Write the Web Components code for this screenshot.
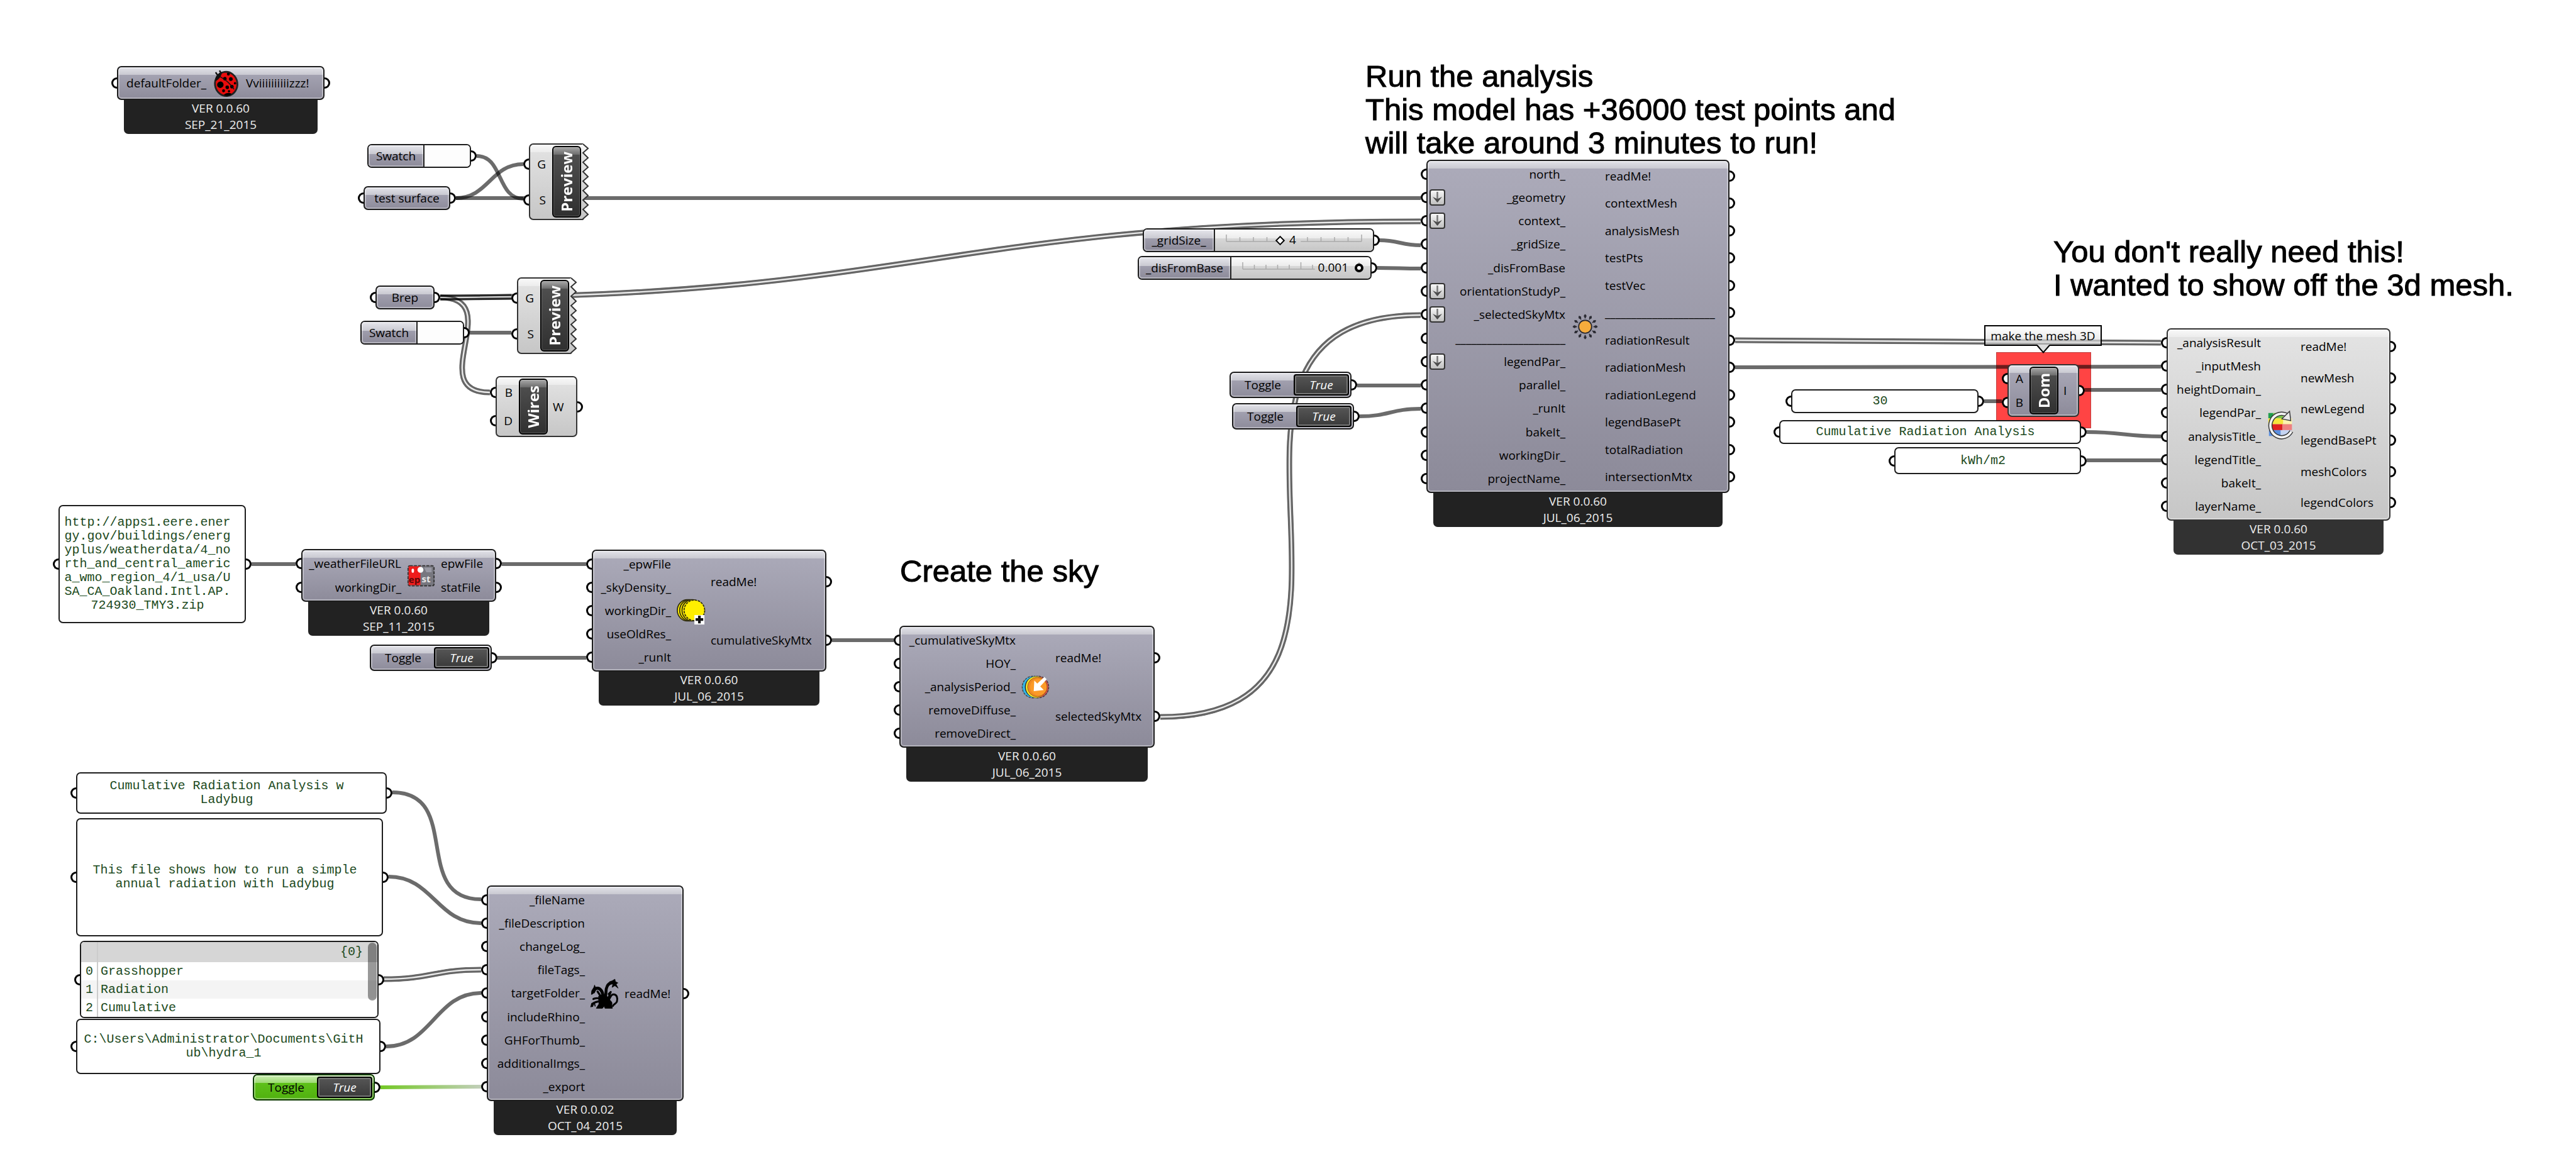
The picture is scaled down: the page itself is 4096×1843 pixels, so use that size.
<!DOCTYPE html>
<html lang="en">
<head>
<meta charset="utf-8">
<title>Cumulative Radiation Analysis</title>
<style>
  html, body { margin: 0; background: #fff; }
  body { font: 19px/26px "Open Sans", "Noto Sans", sans-serif; color: #000; }
</style>
</head>
<body>
<gh-canvas>
  <gh-group style="left:3174px;top:560px;width:151px;height:121px"></gh-group>

  <gh-wire from="758,248" to="832,316"></gh-wire>
  <gh-wire from="725,315" to="832,261"></gh-wire>
  <gh-wire from="725,315" to="2259,315"></gh-wire>
  <gh-wire list from="700,473" to="813,472"></gh-wire>
  <gh-wire list from="700,473" to="2259,352"></gh-wire>
  <gh-wire list from="700,473" to="779,624"></gh-wire>
  <gh-wire from="747,529" to="813,529"></gh-wire>
  <gh-wire from="2193,382" to="2259,390"></gh-wire>
  <gh-wire from="2190,426" to="2259,427"></gh-wire>
  <gh-wire from="2158,613" to="2259,613"></gh-wire>
  <gh-wire from="2162,662" to="2259,650"></gh-wire>
  <gh-wire list from="1845,1140" to="2259,501"></gh-wire>
  <gh-wire list from="2759,541" to="3436,545"></gh-wire>
  <gh-wire from="2759,584" to="3436,583"></gh-wire>
  <gh-wire from="3155,638" to="3183,638"></gh-wire>
  <gh-wire from="3315,620" to="3436,620"></gh-wire>
  <gh-wire from="3318,687" to="3436,694"></gh-wire>
  <gh-wire from="3318,732" to="3436,732"></gh-wire>
  <gh-wire from="400,897" to="470,897"></gh-wire>
  <gh-wire from="798,897" to="932,897"></gh-wire>
  <gh-wire from="791,1046" to="932,1046"></gh-wire>
  <gh-wire from="1323,1018" to="1421,1018"></gh-wire>
  <gh-wire from="624,1260" to="765,1430"></gh-wire>
  <gh-wire from="618,1394" to="765,1468"></gh-wire>
  <gh-wire list from="610,1557" to="765,1542"></gh-wire>
  <gh-wire from="614,1664" to="765,1579"></gh-wire>
  <gh-wire selected from="605,1729" to="765,1728"></gh-wire>

  <gh-component style="left:186px;top:105px;width:330px;--h:54px;--in:142px" version="VER 0.0.60" date="SEP_21_2015">
    <gh-port slot="in">defaultFolder_</gh-port>
    <gh-icon slot="icon" name="ladybug"></gh-icon>
    <gh-port slot="out" side="out">Vviiiiiiiiiizzz!</gh-port>
  </gh-component>

  <gh-swatch style="left:584px;top:229px" label="Swatch"></gh-swatch>
  <gh-param style="left:578px;top:296px;width:138px">test surface</gh-param>
  <gh-badge-component torn style="left:841px;top:228px;width:86px;--h:122px;--in:27px" label="Preview">
    <gh-port slot="in">G</gh-port>
    <gh-port slot="in">S</gh-port>
  </gh-badge-component>

  <gh-param style="left:597px;top:454px;width:94px">Brep</gh-param>
  <gh-swatch style="left:573px;top:510px" label="Swatch"></gh-swatch>
  <gh-badge-component torn style="left:822px;top:441px;width:86px;--h:122px;--in:27px" label="Preview">
    <gh-port slot="in">G</gh-port>
    <gh-port slot="in">S</gh-port>
  </gh-badge-component>
  <gh-badge-component style="left:788px;top:598px;width:130px;--h:97px;--in:27px" label="Wires">
    <gh-port slot="in">B</gh-port>
    <gh-port slot="in">D</gh-port>
    <gh-port slot="out" side="out">W</gh-port>
  </gh-badge-component>

  <gh-note style="left:2171px;top:95px">Run the analysis<br>This model has +36000 test points and<br>will take around 3 minutes to run!</gh-note>
  <gh-note style="left:3265px;top:374px">You don't really need this!<br>I wanted to show off the 3d mesh.</gh-note>
  <gh-note style="left:1431px;top:882px">Create the sky</gh-note>

  <gh-slider style="left:1817px;top:363px;width:368px;--label:113px;--pad:11px" label="_gridSize_" min="0" max="10" value="4" text="4" shape="diamond"></gh-slider>
  <gh-slider style="left:1809px;top:407px;width:372px;--label:147px;--pad:11px" label="_disFromBase" min="0" max="0.001" value="0.001" text="0.001" shape="ring"></gh-slider>

  <gh-component style="left:2268px;top:254px;width:482px;--h:530px;--in:221px" version="VER 0.0.60" date="JUL_06_2015">
    <gh-port slot="in">north_</gh-port>
    <gh-port slot="in" flatten>_geometry</gh-port>
    <gh-port slot="in" flatten>context_</gh-port>
    <gh-port slot="in">_gridSize_</gh-port>
    <gh-port slot="in">_disFromBase</gh-port>
    <gh-port slot="in" flatten>orientationStudyP_</gh-port>
    <gh-port slot="in" flatten>_selectedSkyMtx</gh-port>
    <gh-port slot="in">_____________________</gh-port>
    <gh-port slot="in" flatten>legendPar_</gh-port>
    <gh-port slot="in">parallel_</gh-port>
    <gh-port slot="in">_runIt</gh-port>
    <gh-port slot="in">bakeIt_</gh-port>
    <gh-port slot="in">workingDir_</gh-port>
    <gh-port slot="in">projectName_</gh-port>
    <gh-icon slot="icon" name="sun"></gh-icon>
    <gh-port slot="out" side="out">readMe!</gh-port>
    <gh-port slot="out" side="out">contextMesh</gh-port>
    <gh-port slot="out" side="out">analysisMesh</gh-port>
    <gh-port slot="out" side="out">testPts</gh-port>
    <gh-port slot="out" side="out">testVec</gh-port>
    <gh-port slot="out" side="out">_____________________</gh-port>
    <gh-port slot="out" side="out">radiationResult</gh-port>
    <gh-port slot="out" side="out">radiationMesh</gh-port>
    <gh-port slot="out" side="out">radiationLegend</gh-port>
    <gh-port slot="out" side="out">legendBasePt</gh-port>
    <gh-port slot="out" side="out">totalRadiation</gh-port>
    <gh-port slot="out" side="out">intersectionMtx</gh-port>
  </gh-component>

  <gh-toggle style="left:1955px;top:591px" label="Toggle" value="True"></gh-toggle>
  <gh-toggle style="left:1959px;top:641px" label="Toggle" value="True"></gh-toggle>

  <gh-badge-component tone="violet" style="left:3192px;top:579px;width:114px;--h:84px;--in:25px" label="Dom">
    <gh-port slot="in">A</gh-port>
    <gh-port slot="in">B</gh-port>
    <gh-port slot="out" side="out">I</gh-port>
  </gh-badge-component>
  <gh-tag style="left:3155px;top:517px;width:187px">make the mesh 3D</gh-tag>

  <gh-panel style="left:2848px;top:619px;width:298px;--h:38px">30</gh-panel>
  <gh-panel style="left:2829px;top:668px;width:480px;--h:38px">Cumulative Radiation Analysis</gh-panel>
  <gh-panel style="left:3012px;top:711px;width:297px;--h:43px">kWh/m2</gh-panel>

  <gh-component tone="light" style="left:3445px;top:522px;width:356px;--h:306px;--in:150px" version="VER 0.0.60" date="OCT_03_2015">
    <gh-port slot="in">_analysisResult</gh-port>
    <gh-port slot="in">_inputMesh</gh-port>
    <gh-port slot="in">heightDomain_</gh-port>
    <gh-port slot="in">legendPar_</gh-port>
    <gh-port slot="in">analysisTitle_</gh-port>
    <gh-port slot="in">legendTitle_</gh-port>
    <gh-port slot="in">bakeIt_</gh-port>
    <gh-port slot="in">layerName_</gh-port>
    <gh-icon slot="icon" name="recolor"></gh-icon>
    <gh-port slot="out" side="out">readMe!</gh-port>
    <gh-port slot="out" side="out">newMesh</gh-port>
    <gh-port slot="out" side="out">newLegend</gh-port>
    <gh-port slot="out" side="out">legendBasePt</gh-port>
    <gh-port slot="out" side="out">meshColors</gh-port>
    <gh-port slot="out" side="out">legendColors</gh-port>
  </gh-component>

  <gh-panel breaks style="left:93px;top:803px;width:298px;--h:188px">http://apps1.eere.energy.gov/buildings/energyplus/weatherdata/4_north_and_central_america_wmo_region_4/1_usa/USA_CA_Oakland.Intl.AP.724930_TMY3.zip</gh-panel>
  <gh-component style="left:479px;top:873px;width:310px;--h:84px;--in:159px" version="VER 0.0.60" date="SEP_11_2015">
    <gh-port slot="in">_weatherFileURL</gh-port>
    <gh-port slot="in">workingDir_</gh-port>
    <gh-icon slot="icon" name="weather"></gh-icon>
    <gh-port slot="out" side="out">epwFile</gh-port>
    <gh-port slot="out" side="out">statFile</gh-port>
  </gh-component>
  <gh-toggle style="left:588px;top:1025px" label="Toggle" value="True"></gh-toggle>

  <gh-component style="left:941px;top:874px;width:373px;--h:194px;--in:126px" version="VER 0.0.60" date="JUL_06_2015">
    <gh-port slot="in">_epwFile</gh-port>
    <gh-port slot="in">_skyDensity_</gh-port>
    <gh-port slot="in">workingDir_</gh-port>
    <gh-port slot="in">useOldRes_</gh-port>
    <gh-port slot="in">_runIt</gh-port>
    <gh-icon slot="icon" name="suns"></gh-icon>
    <gh-port slot="out" side="out">readMe!</gh-port>
    <gh-port slot="out" side="out">cumulativeSkyMtx</gh-port>
  </gh-component>

  <gh-component style="left:1430px;top:995px;width:406px;--h:194px;--in:185px" version="VER 0.0.60" date="JUL_06_2015">
    <gh-port slot="in">_cumulativeSkyMtx</gh-port>
    <gh-port slot="in">HOY_</gh-port>
    <gh-port slot="in">_analysisPeriod_</gh-port>
    <gh-port slot="in">removeDiffuse_</gh-port>
    <gh-port slot="in">removeDirect_</gh-port>
    <gh-icon slot="icon" name="select-sky"></gh-icon>
    <gh-port slot="out" side="out">readMe!</gh-port>
    <gh-port slot="out" side="out">selectedSkyMtx</gh-port>
  </gh-component>

  <gh-panel style="left:121px;top:1228px;width:494px;--h:66px">Cumulative Radiation Analysis w Ladybug</gh-panel>
  <gh-panel style="left:121px;top:1301px;width:488px;--h:188px">This file shows how to run a simple annual radiation with Ladybug</gh-panel>
  <gh-list-panel style="left:127px;top:1496px;width:475px" path="{0}" items="Grasshopper|Radiation|Cumulative"></gh-list-panel>
  <gh-panel breaks style="left:121px;top:1620px;width:484px;--h:88px">C:\Users\Administrator\Documents\GitHub\hydra_1</gh-panel>
  <gh-toggle selected style="left:402px;top:1708px" label="Toggle" value="True"></gh-toggle>

  <gh-component style="left:774px;top:1408px;width:313px;--h:343px;--in:156px" version="VER 0.0.02" date="OCT_04_2015">
    <gh-port slot="in">_fileName</gh-port>
    <gh-port slot="in">_fileDescription</gh-port>
    <gh-port slot="in">changeLog_</gh-port>
    <gh-port slot="in">fileTags_</gh-port>
    <gh-port slot="in">targetFolder_</gh-port>
    <gh-port slot="in">includeRhino_</gh-port>
    <gh-port slot="in">GHForThumb_</gh-port>
    <gh-port slot="in">additionalImgs_</gh-port>
    <gh-port slot="in">_export</gh-port>
    <gh-icon slot="icon" name="hydra"></gh-icon>
    <gh-port slot="out" side="out">readMe!</gh-port>
  </gh-component>
</gh-canvas>

<script>
const SHEEN = 'linear-gradient(#e6e6ec, #c9c9d1) top / 100% 14px no-repeat';
const SHARED = `
  * { box-sizing: border-box; }
  :host {
    position: absolute; display: block;
    --violet: ${SHEEN}, linear-gradient(#acabba, #8c8a99);
    --light: linear-gradient(#fbfbfb, #ececec) top / 100% 14px no-repeat, linear-gradient(#e4e4e4, #c6c6c6);
    --dark: linear-gradient(#a8a8a8, #6c6c6c) top / 100% 12px no-repeat, linear-gradient(#525252, #303030);
    --rim: inset 0 0 0 2px rgba(255,255,255,.35);
  }
  .box { position: relative; border: 2px solid #1c1c1c; border-radius: 7px; background-origin: border-box; }
  .grip { position: absolute; top: 50%; margin-top: -9px; width: 9px; height: 18px; background: #fff; border: 3px solid #000; }
  .grip.l { left: -11px; border-right: 0; border-radius: 9px 0 0 9px; }
  .grip.r { right: -11px; border-left: 0; border-radius: 0 9px 9px 0; }
`;
const define = (name, css, html, setup) => customElements.define(name, class extends HTMLElement {
  constructor() { super(); this.attachShadow({ mode: 'open' }); }
  connectedCallback() {
    const t = document.createElement('template');
    t.innerHTML = `<style>${css}</style>${typeof html === 'function' ? html(this) : html}`;
    this.shadowRoot.replaceChildren(t.content.cloneNode(true));
    if (setup) setup(this, this.shadowRoot);
  }
});
const attr = (el, n) => el.getAttribute(n) ?? '';

define('gh-canvas', `
  :host { display: block; position: relative; min-height: 100vh; overflow: hidden; background: #fff; }
`, '<slot></slot>');

define('gh-group', `
  :host { position: absolute; display: block; box-sizing: border-box; background: #ff4444; border: 1px solid #c04040; }
`, '');

define('gh-note', `
  :host { position: absolute; display: block; white-space: nowrap; font: 49px/53px "Liberation Sans", Arial, sans-serif; -webkit-text-stroke: 1px #000; }
`, '<slot></slot>');

/* Cubic wire with horizontal tangents that get longer on steep runs; a list wire is drawn as a double line. */
let wireCount = 0;
define('gh-wire', `
  :host { position: absolute; inset: 0; display: block; pointer-events: none; }
  svg { display: block; width: 100%; height: 100%; overflow: visible; }
  path { fill: none; }
`, el => {
  const [x1, y1] = attr(el, 'from').split(',').map(Number);
  const [x2, y2] = attr(el, 'to').split(',').map(Number);
  const w = Math.abs(x2 - x1), h = Math.abs(y2 - y1);
  const c = w * .48 + Math.max(0, h - w * .8) * .78;
  const d = `M${x1} ${y1}C${x1 + c} ${y1} ${x2 - c} ${y2} ${x2} ${y2}`;
  const id = 'w' + (++wireCount);
  if (el.hasAttribute('selected')) return `<svg aria-hidden="true"><defs><linearGradient id="${id}" gradientUnits="userSpaceOnUse" x1="${x1}" y1="0" x2="${x2}" y2="0"><stop offset="0" stop-color="#74c826"/><stop offset="1" stop-color="#c2cfba"/></linearGradient></defs><path d="${d}" stroke="url(#${id})" stroke-width="6"/></svg>`;
  if (el.hasAttribute('list')) return `<svg aria-hidden="true"><defs><mask id="${id}" maskUnits="userSpaceOnUse" x="${Math.min(x1, x2) - 40}" y="${Math.min(y1, y2) - 40}" width="${w + 80}" height="${h + 80}"><path d="${d}" stroke="#fff" stroke-width="10"/><path d="${d}" stroke="#222" stroke-width="2.4"/></mask></defs><g mask="url(#${id})"><path d="${d}" stroke="rgba(0,0,0,.6)" stroke-width="9"/></g></svg>`;
  return `<svg aria-hidden="true"><path d="${d}" stroke="rgba(0,0,0,.58)" stroke-width="6"/></svg>`;
});

define('gh-port', `
  * { box-sizing: border-box; }
  :host { flex: 1; display: flex; align-items: center; justify-content: flex-end; position: relative; white-space: nowrap; }
  :host([side=out]) { justify-content: flex-start; }
  .grip { position: absolute; top: 50%; left: -11px; margin-top: -9px; width: 9px; height: 18px; background: #fff; border: 3px solid #000; border-right: 0; border-radius: 9px 0 0 9px; }
  :host([side=out]) .grip { left: auto; right: -11px; border: 3px solid #000; border-left: 0; border-radius: 0 9px 9px 0; }
  .flatten { margin: 0 auto 0 3px; width: 25px; height: 26px; }
`, el => `<span class="grip"></span>${el.hasAttribute('flatten') ? `
  <svg class="flatten" viewBox="0 0 25 26" aria-hidden="true"><defs><linearGradient id="f" x2="0" y2="1"><stop stop-color="#fafafa"/><stop offset="1" stop-color="#bdbdbd"/></linearGradient></defs>
  <rect x="1" y="1" width="23" height="24" rx="3" fill="url(#f)" stroke="#333" stroke-width="2"/><path d="M12.5 4V20" stroke="#777" stroke-width="2.5"/><path d="M5 12L12.500 21L20 12L12.500 15.500Z" fill="#4d4d4d"/></svg>` : ''}<span><slot></slot></span>`);

define('gh-component', SHARED + `
  .box { display: flex; height: var(--h); padding: 2px 0; background: var(--violet); background-origin: border-box; box-shadow: var(--rim); }
  :host([tone=light]) .box { background: var(--light); background-origin: border-box; border-color: #333; }
  .col { display: flex; flex-direction: column; }
  .ins { flex: none; width: calc(var(--in) - 2px); }
  .mid { flex: none; width: 63px; display: flex; align-items: center; justify-content: center; }
  .outs { flex: 1; }
  footer { margin: 0 11px; padding-bottom: 2px; background: #222; color: #eee; text-align: center; border-radius: 0 0 7px 7px; }
  :host([tone=light]) footer { background: #323232; }
  footer div { height: 26px; line-height: 26px; }
`, el => `<section class="box"><div class="col ins"><slot name="in"></slot></div><div class="mid"><slot name="icon"></slot></div><div class="col outs"><slot name="out"></slot></div></section>
  <footer><div>${attr(el, 'version')}</div><div>${attr(el, 'date')}</div></footer>`);

define('gh-badge-component', SHARED + `
  .box { display: flex; height: var(--h); padding: 2px 0; background: var(--light); background-origin: border-box; border-color: #333; }
  :host([tone=violet]) .box { background: var(--violet); background-origin: border-box; box-shadow: var(--rim); }
  :host([torn]) .box { border-right: 0; border-radius: 7px 0 0 7px; }
  .col { display: flex; flex-direction: column; }
  .ins { flex: none; width: calc(var(--in) - 2px); }
  .outs { flex: 1; padding-left: 8px; }
  .badge { flex: none; width: 46px; margin-left: 10px; display: flex; align-items: center; justify-content: center;
    background: var(--dark); border: 2px solid #000; border-radius: 6px; box-shadow: inset 0 0 0 1px rgba(255,255,255,.2); }
  .badge b { writing-mode: vertical-rl; transform: rotate(180deg); color: #fff; font-size: 24px; line-height: 36px; }
  .edge { position: absolute; left: 100%; top: 0; width: 10px; height: 100%; overflow: visible; }
`, el => {
  let zig = 'M0 1';
  for (let i = 0; i < 8; i++) zig += `L8 ${8 + i * 15}L0 ${15 + i * 15}`;
  zig += 'L1 121';
  const edge = `<svg class="edge" viewBox="0 0 10 122" preserveAspectRatio="none" aria-hidden="true"><defs><linearGradient id="g" x2="0" y2="1"><stop stop-color="#fbfbfb"/><stop offset=".11" stop-color="#ececec"/><stop offset=".12" stop-color="#e2e2e2"/><stop offset="1" stop-color="#c6c6c6"/></linearGradient></defs><path d="${zig}L-2 120L-2 2Z" fill="url(#g)"/><path d="${zig}" fill="none" stroke="#333" stroke-width="2"/></svg>`;
  return `<section class="box"><div class="col ins"><slot name="in"></slot></div><div class="badge"><b>${attr(el, 'label')}</b></div><div class="col outs"><slot name="out"></slot></div></section>${el.hasAttribute('torn') ? edge : ''}`;
});

define('gh-param', SHARED + `
  .box { height: 38px; display: flex; align-items: center; justify-content: center; background: var(--violet); background-origin: border-box; box-shadow: var(--rim); white-space: nowrap; }
`, '<div class="box"><span class="grip l"></span><span><slot></slot></span><span class="grip r"></span></div>');

define('gh-swatch', SHARED + `
  :host { width: 165px; }
  .box { height: 38px; display: flex; background: #fff; }
  label { flex: none; width: 89px; display: flex; align-items: center; justify-content: center; background: var(--violet); border-right: 2px solid #222; border-radius: 5px 0 0 5px; box-shadow: var(--rim); }
  button { flex: 1; border: 0; padding: 0; background: #fdfdfd; border-radius: 0 5px 5px 0; }
`, el => `<div class="box"><label for="c">${attr(el, 'label')}</label><button id="c" type="button"></button><span class="grip r"></span></div>`);

define('gh-toggle', SHARED + `
  :host { width: 194px; }
  .box { height: 42px; padding: 2px; display: flex; background: var(--violet); background-origin: border-box; box-shadow: var(--rim); }
  :host([selected]) .box { background: linear-gradient(#d3f2bd, #9edb74) top / 100% 14px no-repeat, linear-gradient(#66c91f, #4fb00e); background-origin: border-box; border-color: #0c3a00; }
  label { flex: 1; display: flex; align-items: center; justify-content: center; }
  button { flex: none; width: 88px; padding: 0; font: italic 19px/26px "Open Sans", sans-serif; color: #fff; background: linear-gradient(#565656, #3a3a3a); border: 2px solid #000; border-radius: 4px; box-shadow: inset 0 0 0 2px #777; }
`, el => `<div class="box"><label for="b">${attr(el, 'label')}</label><button id="b" type="button" aria-pressed="true">${attr(el, 'value')}</button><span class="grip r"></span></div>`);

define('gh-slider', SHARED + `
  .box { height: 38px; display: flex; background: #ddd; }
  label { flex: none; width: var(--label); display: flex; align-items: center; justify-content: center; background: var(--violet); border-right: 2px solid #222; border-radius: 5px 0 0 5px; box-shadow: var(--rim); white-space: nowrap; }
  .track { flex: 1; position: relative; padding: 0 var(--pad); background: var(--light); border-radius: 0 5px 5px 0; display: flex; align-items: center; }
  .ticks { position: absolute; left: 18px; right: 18px; top: 7px; width: calc(100% - 36px); height: 12px; overflow: visible; }
  input { -webkit-appearance: none; appearance: none; position: relative; flex: 1; min-width: 0; margin: 0; height: 20px; background: none; }
  input::-webkit-slider-thumb { -webkit-appearance: none; width: 14px; height: 14px; background: #fff; border: 4px solid #000; border-radius: 50%; }
  :host([shape=diamond]) input::-webkit-slider-thumb { width: 11px; height: 11px; border: 2px solid #000; border-radius: 0; transform: rotate(45deg); }
  output { position: absolute; top: 3px; line-height: 26px; }
  :host([shape=diamond]) output { left: 47%; }
  :host([shape=ring]) output { right: 35px; }
`, el => {
  let t = '';
  const ring = attr(el, 'shape') === 'ring';
  for (let i = 0; i <= 10; i++) {
    if (ring ? (i > 6 && i < 10) : (i === 4 || i === 5)) continue;
    t += `M${i * 10} 12V${i % 5 ? 5 : 1}`;
  }
  return `<div class="box"><label for="r">${attr(el, 'label')}</label><div class="track">
    <svg class="ticks" viewBox="0 0 100 12" preserveAspectRatio="none" aria-hidden="true"><path d="${t}M0 12H${ring ? 62 : 37}${ring ? '' : 'M55 12H100'}" fill="none" stroke="#aaa" stroke-width="1.5" vector-effect="non-scaling-stroke"/></svg>
    <input id="r" type="range" min="${attr(el, 'min')}" max="${attr(el, 'max')}" step="any" value="${attr(el, 'value')}"><output for="r">${attr(el, 'text')}</output></div><span class="grip r"></span></div>`;
});

define('gh-panel', SHARED + `
  .box { height: var(--h); display: flex; align-items: center; background: #fff; padding: 0 20px 0 5px; font: 20px/22px "Liberation Mono", monospace; color: #1c4a20; text-align: center; }
  p { flex: 1; margin: 0; min-width: 0; }
  :host([breaks]) p { word-break: break-all; }
`, '<div class="box"><span class="grip l"></span><p><slot></slot></p><span class="grip r"></span></div>');

define('gh-list-panel', SHARED + `
  .box { background: #fff; font: 20px/22px "Liberation Mono", monospace; color: #1c4a20; }
  table { width: 100%; border-collapse: collapse; background: #fff; border-radius: 5px; overflow: hidden; }
  th, td { padding: 0; height: 29px; font-weight: 400; text-align: left; }
  thead tr { background: #d6d6d6; }
  thead th { height: 32px; text-align: right; padding-right: 23px; }
  tbody tr:nth-child(even) { background: #f4f4f4; }
  tr > :first-child { width: 26px; padding: 0 6px 0 0; text-align: right; border-right: 2px solid #ccc; }
  td { padding-left: 4px; }
  .bar { position: absolute; right: 1px; top: 1px; width: 14px; height: 92px; border-radius: 7px; background: rgba(0,0,0,.4); }
`, el => `<div class="box"><span class="grip l"></span><table><thead><tr><th></th><th>${attr(el, 'path')}</th></tr></thead><tbody>${
  attr(el, 'items').split('|').map((s, i) => `<tr><td>${i}</td><td>${s}</td></tr>`).join('')}</tbody></table><span class="bar"></span><span class="grip r"></span></div>`);

define('gh-tag', `
  * { box-sizing: border-box; }
  :host { position: absolute; display: block; }
  .tag { height: 33px; line-height: 30px; text-align: center; white-space: nowrap; border: 2px solid #000; background: linear-gradient(rgba(255,255,255,.9), rgba(205,205,205,.6)); }
  svg { display: block; width: 22px; height: 14px; margin: -2px auto 0; }
`, '<div class="tag"><slot></slot></div><svg viewBox="0 0 22 14" aria-hidden="true"><path d="M1 0L11 12.500L21 0Z" fill="#ddd"/><path d="M1 1L11 12.500L21 1" fill="none" stroke="#000" stroke-width="2"/></svg>');

const ray = () => Array.from({ length: 12 }, (_, i) => {
  const a = i * Math.PI / 6, c = Math.cos(a), s = Math.sin(a);
  return `<circle cx="${24 + 18 * c}" cy="${24 + 18 * s}" r="2.300"/><path d="M${24 + 14 * c} ${24 + 14 * s}L${24 + 21 * c} ${24 + 21 * s}" stroke="#2b2b33" stroke-width="2"/>`;
}).join('');
const ICONS = {
  ladybug: `<g transform="rotate(-8 24 24)"><path d="M12 9L9 3M18 6L16 1" stroke="#111" stroke-width="2.500"/><ellipse cx="24" cy="25" rx="19" ry="20.500" fill="#e80c0c" stroke="#222" stroke-width="3"/>
    <path d="M7 14Q10 5 20 4Q17 14 7 18Z" fill="#111"/><circle cx="14" cy="25" r="5.500"/><circle cx="23" cy="16" r="3"/><circle cx="30" cy="9" r="2.500"/><circle cx="33" cy="18" r="3.200"/><circle cx="39" cy="26" r="2"/><circle cx="25" cy="31" r="3"/><circle cx="33" cy="31" r="3"/><circle cx="18" cy="36" r="2.500"/><circle cx="27" cy="38" r="2"/><path d="M15 11Q30 22 36 36" stroke="#111" stroke-width="1.500" fill="none"/><path d="M17 43Q24 38 31 43Q24 48 17 43Z"/></g>`,
  sun: `<circle cx="24" cy="24" r="11" fill="#f6ac3c" stroke="#2b2b33" stroke-width="2"/><g fill="#2b2b33">${ray()}</g>`,
  recolor: `<rect x="3" y="4" width="8" height="9" fill="#1f9d4d"/><rect x="11" y="4" width="17" height="9" fill="#7cc24a"/><rect x="3" y="13" width="38" height="10" fill="#f5e43c"/><rect x="28" y="13" width="15" height="10" fill="#fbf3b0"/><rect x="5" y="23" width="22" height="10" fill="#e02020"/><rect x="27" y="23" width="16" height="10" fill="#ee8080"/><rect x="4" y="33" width="20" height="10" fill="#5a8fe0"/><rect x="24" y="33" width="18" height="10" fill="#c5d4f2"/>
    <path d="M42 35A19 20 0 1 1 31 6L37 8" fill="none" stroke="#333" stroke-width="7"/><path d="M42 35A19 20 0 1 1 31 6L37 8" fill="none" stroke="#f2f2f2" stroke-width="4"/><path d="M39 1L41 17L26 14Z" fill="#e8e8e8" stroke="#333" stroke-width="1.500"/>`,
  weather: `<rect x="2" y="7" width="44" height="34" rx="3" fill="#77777f" stroke="#333" stroke-width="2" stroke-dasharray="5 2"/><path d="M3 8H23V40H3Z" fill="#ee1c1c"/><rect x="8" y="12" width="4" height="7" rx="2" fill="#fff"/><circle cx="23" cy="14" r="5" fill="#fff"/><path d="M29 10H42V18H33Z" fill="#9a9aa5"/><text x="3" y="36" font-family="Open Sans, sans-serif" font-size="16" font-weight="700" fill="#5a0808">ep</text><text x="25" y="35" font-family="Open Sans, sans-serif" font-size="16" font-weight="700" fill="#e6e6e6">st</text>`,
  suns: `<g fill="#ffee00" stroke="#2e2b10" stroke-width="1.800"><ellipse cx="18" cy="23" rx="17" ry="18"/><ellipse cx="22" cy="23" rx="17" ry="18"/><ellipse cx="26" cy="23" rx="17" ry="18"/><circle cx="30" cy="23" r="17.500" stroke-dasharray="4 1.500"/></g><rect x="30" y="31" width="17" height="16" fill="#fff"/><path d="M38.500 32V45M32 38.500H45" stroke="#111" stroke-width="4.500"/>`,
  'select-sky': `<g stroke="#444" stroke-width="1.500" stroke-dasharray="4 1.500"><circle cx="20" cy="24" r="18.500" fill="#34b4e4"/><circle cx="28" cy="24" r="18.500" fill="#cc4b4b"/></g><circle cx="24" cy="24" r="18" fill="#223"/><ellipse cx="25" cy="24" rx="17.500" ry="18" fill="#f4ec2a"/><circle cx="27" cy="24" r="16.500" fill="#f08a24" stroke="#9a5a10"/><circle cx="29" cy="24" r="14" fill="#fb9a28"/><path d="M21 31L22 13L27 18L39 7L43 11L32 23L38 29Z" fill="#fff"/>`,
  hydra: `<g transform="scale(.35)" fill="none" stroke="#000" stroke-linecap="round" stroke-linejoin="round">
    <path d="M70 92C80 66 70 54 80 36C86 22 94 18 106 18" stroke-width="14"/><path d="M92 12L104 8L118 0L121 12L133 18L124 24L134 44L118 32L104 40L108 24Z" fill="#000" stroke-width="2"/>
    <path d="M60 92C62 62 48 42 30 44C20 46 18 54 14 62" stroke-width="15"/><path d="M20 30L24 42L16 46L10 72L4 74L6 56L16 40Z" fill="#000" stroke-width="3"/><path d="M34 60L46 78" stroke-width="10"/>
    <path d="M78 108C98 102 92 74 112 74C128 74 132 92 128 108C124 120 112 120 108 130" stroke-width="9"/><path d="M88 72L98 62L84 96" stroke-width="9"/>
    <path d="M56 104C36 84 22 94 14 96M44 106C28 112 12 110 8 130" stroke-width="10"/><path d="M2 134L6 118L18 112L22 130" stroke-width="5"/>
    <path d="M40 82Q68 66 86 90L96 104Q108 112 102 128L106 141H70L66 130L58 141H28L40 122Z" fill="#000" stroke-width="3"/></g>`
};
define('gh-icon', `:host { display: block; width: 45px; height: 45px; } svg { display: block; width: 100%; height: 100%; overflow: visible; }`,
  el => `<svg viewBox="0 0 48 48" aria-hidden="true">${ICONS[attr(el, 'name')]}</svg>`);
</script>
</body>
</html>
